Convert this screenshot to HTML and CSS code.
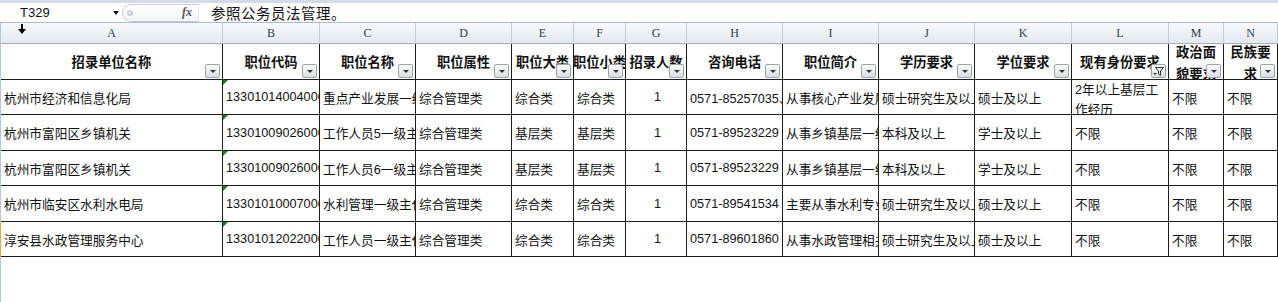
FILE: index.html
```html
<!DOCTYPE html>
<html>
  <head>
    <title>招录职位表</title>
    <link rel="stylesheet" href="styles.css">
  </head>
  <body>
    <div class="formula-bar">
      <div class="name-box">T329<span class="nb-arrow"></span></div>
      <div class="fx-group"><span class="grip"></span><span class="fx">fx</span></div>
      <div class="formula-text">参照公务员法管理。</div>
    </div>

    <div class="sheet">
      <svg class="col-cursor" width="8" height="10" viewBox="0 0 8 10">
        <rect x="3" y="0" width="2" height="6" fill="#000"/>
        <polygon points="0,5 8,5 4,10" fill="#000"/>
      </svg>

      <div class="grid">
        <!-- column letters -->
        <div class="letter">A</div>
        <div class="letter">B</div>
        <div class="letter">C</div>
        <div class="letter">D</div>
        <div class="letter">E</div>
        <div class="letter">F</div>
        <div class="letter">G</div>
        <div class="letter">H</div>
        <div class="letter">I</div>
        <div class="letter">J</div>
        <div class="letter">K</div>
        <div class="letter">L</div>
        <div class="letter">M</div>
        <div class="letter">N</div>

        <!-- header row -->
        <div class="hcell">招录单位名称<span class="filter"></span></div>
        <div class="hcell">职位代码<span class="filter"></span></div>
        <div class="hcell">职位名称<span class="filter"></span></div>
        <div class="hcell">职位属性<span class="filter"></span></div>
        <div class="hcell">职位大类<span class="filter"></span></div>
        <div class="hcell">职位小类<span class="filter"></span></div>
        <div class="hcell">招录人数<span class="filter"></span></div>
        <div class="hcell">咨询电话<span class="filter"></span></div>
        <div class="hcell">职位简介<span class="filter"></span></div>
        <div class="hcell">学历要求<span class="filter"></span></div>
        <div class="hcell">学位要求<span class="filter"></span></div>
        <div class="hcell">现有身份要求<span class="filter active">
          <svg width="9" height="9" viewBox="0 0 9 9"><path d="M0.5 0.5h8l-3 3.5v4.5l-2-1.5v-3z" fill="none" stroke="#333" stroke-width="1"/></svg>
        </span></div>
        <div class="hcell two-line"><span>政治面</span><span>貌要求</span><span class="filter"></span></div>
        <div class="hcell two-line"><span>民族要</span><span>求</span><span class="filter"></span></div>

        <!-- row 1 -->
        <div class="cell first">杭州市经济和信息化局</div>
        <div class="cell code">133010140040001</div>
        <div class="cell">重点产业发展一级主任科员</div>
        <div class="cell">综合管理类</div>
        <div class="cell">综合类</div>
        <div class="cell">综合类</div>
        <div class="cell num">1</div>
        <div class="cell">0571-85257035、85257036</div>
        <div class="cell">从事核心产业发展规划工作</div>
        <div class="cell">硕士研究生及以上</div>
        <div class="cell">硕士及以上</div>
        <div class="cell wrap">2年以上基层工作经历</div>
        <div class="cell">不限</div>
        <div class="cell">不限</div>

        <!-- row 2 -->
        <div class="cell first">杭州市富阳区乡镇机关</div>
        <div class="cell code">133010090260001</div>
        <div class="cell">工作人员5一级主任科员</div>
        <div class="cell">综合管理类</div>
        <div class="cell">基层类</div>
        <div class="cell">基层类</div>
        <div class="cell num">1</div>
        <div class="cell">0571-89523229</div>
        <div class="cell">从事乡镇基层一线工作</div>
        <div class="cell">本科及以上</div>
        <div class="cell">学士及以上</div>
        <div class="cell">不限</div>
        <div class="cell">不限</div>
        <div class="cell">不限</div>

        <!-- row 3 -->
        <div class="cell first">杭州市富阳区乡镇机关</div>
        <div class="cell code">133010090260002</div>
        <div class="cell">工作人员6一级主任科员</div>
        <div class="cell">综合管理类</div>
        <div class="cell">基层类</div>
        <div class="cell">基层类</div>
        <div class="cell num">1</div>
        <div class="cell">0571-89523229</div>
        <div class="cell">从事乡镇基层一线工作</div>
        <div class="cell">本科及以上</div>
        <div class="cell">学士及以上</div>
        <div class="cell">不限</div>
        <div class="cell">不限</div>
        <div class="cell">不限</div>

        <!-- row 4 -->
        <div class="cell first">杭州市临安区水利水电局</div>
        <div class="cell code">133010100070001</div>
        <div class="cell">水利管理一级主任科员</div>
        <div class="cell">综合管理类</div>
        <div class="cell">综合类</div>
        <div class="cell">综合类</div>
        <div class="cell num">1</div>
        <div class="cell">0571-89541534</div>
        <div class="cell">主要从事水利专业技术工作</div>
        <div class="cell">硕士研究生及以上</div>
        <div class="cell">硕士及以上</div>
        <div class="cell">不限</div>
        <div class="cell">不限</div>
        <div class="cell">不限</div>

        <!-- row 5 -->
        <div class="cell first selected">淳安县水政管理服务中心</div>
        <div class="cell code">133010120220001</div>
        <div class="cell">工作人员一级主任科员</div>
        <div class="cell">综合管理类</div>
        <div class="cell">综合类</div>
        <div class="cell">综合类</div>
        <div class="cell num">1</div>
        <div class="cell">0571-89601860</div>
        <div class="cell">从事水政管理相关工作</div>
        <div class="cell">硕士研究生及以上</div>
        <div class="cell">硕士及以上</div>
        <div class="cell">不限</div>
        <div class="cell">不限</div>
        <div class="cell">不限</div>
      </div>
    </div>
  </body>
</html>
```

FILE: styles.css
```css
/* spreadsheet window: formula bar + filtered sheet */
* {
  box-sizing: border-box;
}
body {
  margin: 0;
  padding: 0;
  background: #fff;
  font-family: "Liberation Sans", "Noto Sans CJK SC", sans-serif;
  font-size: 13px;
  color: #111;
  overflow: hidden;
}

/* formula bar */
.formula-bar {
  display: flex;
  align-items: center;
  height: 23px;
  border-top: 3px solid #d2dce8;
  border-bottom: 1px solid #a9bacd;
  background: #fff;
}
.name-box {
  position: relative;
  width: 122px;
  height: 19px;
  padding-left: 20px;
  line-height: 19px;
  font-size: 13px;
  color: #111;
}
.nb-arrow {
  position: absolute;
  left: 113px;
  top: 8px;
  width: 0;
  height: 0;
  border-left: 3px solid transparent;
  border-right: 3px solid transparent;
  border-top: 4px solid #111;
}
.fx-group {
  display: flex;
  align-items: center;
  justify-content: space-between;
  width: 76px;
  height: 18px;
  padding: 0 4px 0 4px;
  border: 1px solid #c4ccd7;
  border-right: none;
  border-radius: 9px 0 0 9px;
  background: linear-gradient(#ffffff, #f1f3f6);
}
.grip {
  width: 6px;
  height: 6px;
  border-radius: 50%;
  background: radial-gradient(circle at 40% 40%, #e8ebef, #a9b0ba);
}
.fx {
  font-family: "Liberation Serif", serif;
  font-style: italic;
  font-weight: bold;
  font-size: 12px;
  color: #555;
  margin-right: 2px;
}
.formula-text {
  flex: 1;
  height: 19px;
  padding-left: 12px;
  line-height: 19px;
  font-family: "Noto Sans CJK SC", sans-serif;
  font-size: 14.5px;
  letter-spacing: 0.5px;
  border-left: 1px solid #e2e7ee;
}

/* sheet */
.sheet {
  position: relative;
  height: 279px;
  border-left: 1px solid #b7c7da;
}
.col-cursor {
  position: absolute;
  left: 17px;
  top: 1px;
  z-index: 2;
}
.grid {
  display: grid;
  grid-template-columns: 222px 97px 96px 96px 62px 52px 61px 96px 96px 96px 97px 97px 55px 54px;
  grid-template-rows: 21px 36px 35px 36px 35px 36px 35px;
}
.letter {
  display: flex;
  align-items: center;
  justify-content: center;
  padding-top: 1px;
  font-family: "Liberation Serif", serif;
  font-size: 12px;
  color: #2f3d4f;
  background: linear-gradient(#f7f9fb, #e4e9ef);
  border-right: 1px solid #c2cbd6;
  border-bottom: 1px solid #9fb0c4;
}

.hcell,
.cell {
  position: relative;
  overflow: hidden;
  white-space: nowrap;
  border-right: 1px solid #1c1c1c;
  border-bottom: 1px solid #1c1c1c;
}
.hcell {
  display: flex;
  align-items: center;
  justify-content: center;
  font-family: "Noto Sans CJK SC", sans-serif;
  font-weight: bold;
  font-size: 13.3px;
  color: #111;
}
.hcell.two-line {
  flex-direction: column;
  justify-content: flex-start;
  gap: 6px;
  line-height: 16px;
}
.filter {
  position: absolute;
  right: 2px;
  bottom: 1px;
  width: 15px;
  height: 14px;
  border: 1px solid #9ea3aa;
  border-radius: 2px;
  background: linear-gradient(#fbfbfc, #d9dce1);
}
.filter::after {
  content: "";
  position: absolute;
  left: 4px;
  top: 5px;
  border-left: 3px solid transparent;
  border-right: 3px solid transparent;
  border-top: 3px solid #333;
}
.filter.active svg {
  position: absolute;
  right: 1px;
  top: 2px;
}
.filter.active::after {
  left: 1px;
  top: 8px;
  border-left-width: 2px;
  border-right-width: 2px;
  border-top-width: 2px;
}

.cell {
  display: flex;
  align-items: center;
  padding-left: 3px;
  font-size: 12.7px;
}
.cell.num {
  justify-content: center;
}
.cell.code::before {
  content: "";
  position: absolute;
  left: 0;
  top: 0;
  border-top: 5px solid #1d7b27;
  border-right: 5px solid transparent;
}
.cell.wrap {
  align-items: flex-start;
  white-space: normal;
  line-height: 20px;
  padding-top: 0;
  word-break: break-all;
}
.cell.selected {
  box-shadow: -1px 0 0 #f0a23c;
}
```
